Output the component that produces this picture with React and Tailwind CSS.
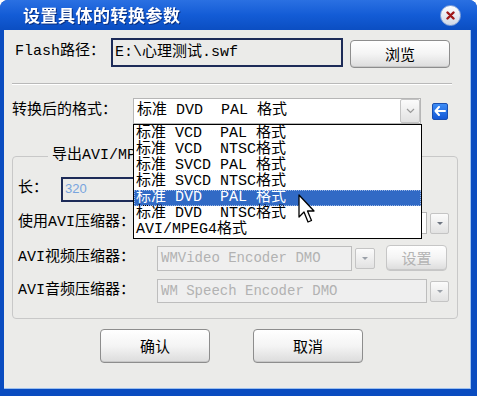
import React from 'react';

const mono = "font-['Liberation_Mono','Noto_Sans_CJK_SC',monospace]";
const sans = "font-['Noto_Sans_CJK_SC','Noto_Sans',sans-serif]";

const formats = [
  '标准 VCD  PAL 格式',
  '标准 VCD  NTSC格式',
  '标准 SVCD PAL 格式',
  '标准 SVCD NTSC格式',
  '标准 DVD  PAL 格式',
  '标准 DVD  NTSC格式',
  'AVI/MPEG4格式',
];

function DropBtn({ chevron, disabled, className = '' }) {
  return (
    <div className={`flex items-center justify-center rounded-[2px] border border-[#c4c4c4] bg-gradient-to-b from-[#fbfbfb] to-[#e2e2e2] ${className}`}>
      {chevron ? (
        <svg width="9" height="6" viewBox="0 0 9 6"><path d="M1 1 L4.5 4.5 L8 1" fill="none" stroke="#9a9a9a" strokeWidth="1.2" /></svg>
      ) : (
        <svg width="8" height="5" viewBox="0 0 8 5"><path d="M1 1 H7 L4 4 Z" fill={disabled ? '#9aa0a8' : '#6d7480'} /></svg>
      )}
    </div>
  );
}

function PushBtn({ children, className = '', disabled }) {
  return (
    <div className={`flex items-center justify-center rounded-[4px] border border-[#8d8d8d] bg-gradient-to-b from-white via-[#f4f4f4] to-[#dcdcdc] shadow-[inset_0_-1px_0_#c8c8c8] ${sans} ${disabled ? 'text-[#b4b4b4] border-[#c6c6c6]' : 'text-black'} ${className}`}>
      {children}
    </div>
  );
}

export default function App() {
  return (
    <div className="relative w-[477px] h-[396px] bg-[#0a4cc0] rounded-t-[8px] overflow-hidden">
      {/* title bar */}
      <div className="h-[30px] flex items-center pl-[23px] pr-[16px] bg-gradient-to-b from-[#2a70e2] via-[#135cd6] to-[#0b4ec2]">
        <span className={`text-white text-[17px] font-bold tracking-[0.5px] drop-shadow-[1px_1px_0_#0a2f80] ${sans}`}>设置具体的转换参数</span>
        <div className="ml-auto w-[21px] h-[21px] rounded-full border border-[#8aa6d8] bg-gradient-to-b from-white to-[#cfd8e6] flex items-center justify-center">
          <svg width="9" height="9" viewBox="0 0 9 9"><path d="M1.5 1.5 L7.5 7.5 M7.5 1.5 L1.5 7.5" stroke="#a01818" strokeWidth="2.4" strokeLinecap="round" /></svg>
        </div>
      </div>

      {/* client area */}
      <div className={`ml-[4px] w-[467px] h-[359px] bg-[#ebebe9] border-r border-b border-[#9cc0f0] ${mono} text-[15px] text-black`}>
        {/* flash path */}
        <div className="flex items-start pt-[8px] pl-[11px]">
          <div className="w-[96px] h-[29px] flex items-center">Flash路径：</div>
          <div className="w-[232px] h-[29px] border-2 border-[#1d2b58] bg-[#ebebe9] flex items-center pl-[2px] leading-none">E:\心理测试.swf</div>
          <PushBtn className="ml-[7px] mt-[2px] w-[100px] h-[28px] text-[15px]">浏览</PushBtn>
        </div>

        <div className="mx-[8px] mt-[15px] w-[440px] border-t border-[#b9b9b9] border-b border-b-white" />

        {/* target format */}
        <div className="mt-[13px] h-[26px] flex items-center pl-[8px]">
          <div className="w-[121px]">转换后的格式：</div>
          <div className="w-[288px] h-[26px] bg-white border border-[#b6b6b6] flex items-center">
            <span className="flex-1 pl-[3px] whitespace-pre">标准 DVD  PAL 格式</span>
            <DropBtn chevron className="w-[20px] h-[24px]" />
          </div>
          <div className="ml-[11px] w-[16px] h-[17px] rounded-[2px] bg-gradient-to-b from-[#3d8cf5] to-[#1458d6] border border-[#1a4fb0] flex items-center justify-center">
            <svg width="12" height="10" viewBox="0 0 12 10"><path d="M5 1 L1.5 5 L5 9 M1.5 5 H11" fill="none" stroke="white" strokeWidth="2" strokeLinecap="round" strokeLinejoin="round" /></svg>
          </div>
        </div>

        {/* AVI/MPEG4 group */}
        <fieldset className="mx-[8px] mt-[23px] w-[446px] h-[172px] border border-[#c8c8c8] rounded-[4px] pl-[5px] pb-[14px]">
          <legend className="ml-[30px] px-[4px] h-[18px] leading-[18px]">导出AVI/MP</legend>
          <div className="mt-[11px] h-[26px] flex items-center">
            <div className="w-[43px]">长：</div>
            <div className="w-[92px] h-[25px] border-2 border-[#1d2b58] bg-[#ebebe9] flex items-center pl-[2px] font-['Liberation_Sans',sans-serif] text-[13px] text-[#78a4de]">320</div>
          </div>
          <div className="mt-[8px] h-[26px] flex items-center">
            <div className="w-[139px]">使用AVI压缩器：</div>
            <div className="w-[270px] h-[22px] bg-white border border-[#b6b6b6]" />
            <DropBtn className="ml-[3px] w-[19px] h-[21px]" />
          </div>
          <div className="mt-[9px] h-[26px] flex items-center">
            <div className="w-[139px]">AVI视频压缩器：</div>
            <div className="w-[195px] h-[25px] bg-[#efefef] border border-[#bdbdbd] flex items-center pl-[3px] text-[#b2b2b2] text-[14px]">WMVideo Encoder DMO</div>
            <DropBtn disabled className="ml-[3px] w-[20px] h-[21px]" />
            <PushBtn disabled className="ml-[11px] w-[61px] h-[26px] text-[15px]">设置</PushBtn>
          </div>
          <div className="mt-[7px] h-[26px] flex items-center">
            <div className="w-[139px]">AVI音频压缩器：</div>
            <div className="w-[270px] h-[24px] bg-[#efefef] border border-[#bdbdbd] flex items-center pl-[3px] text-[#b2b2b2] text-[14px]">WM Speech Encoder DMO</div>
            <DropBtn disabled className="ml-[3px] w-[19px] h-[21px]" />
          </div>
        </fieldset>

        {/* confirm / cancel */}
        <div className="mt-[10px] flex pl-[96px] gap-[43px]">
          <PushBtn className="w-[110px] h-[34px] text-[15px]">确认</PushBtn>
          <PushBtn className="w-[110px] h-[34px] text-[15px]">取消</PushBtn>
        </div>
      </div>

      {/* open dropdown list */}
      <div className={`absolute left-[133px] top-[124px] w-[289px] h-[115px] bg-white border border-black py-[1px] ${mono} text-[15px]`}>
        {formats.map((f, i) => (
          <div
            key={f}
            className={`h-[16px] leading-[16px] pl-[2px] whitespace-pre ${i === 4 ? 'bg-[#316ac5] text-white outline-1 outline-dotted outline-[#9ab6e6] -outline-offset-1' : 'text-black'}`}
          >
            {f}
          </div>
        ))}
      </div>

      {/* mouse pointer */}
      <svg className="absolute left-[298px] top-[194px]" width="18" height="30" viewBox="0 0 18 30">
        <path d="M1 1 L1 23 L6 18 L10 28 L13.5 26.5 L9.5 17 L16 17 Z" fill="white" stroke="black" strokeWidth="1.3" strokeLinejoin="round" />
      </svg>
    </div>
  );
}
